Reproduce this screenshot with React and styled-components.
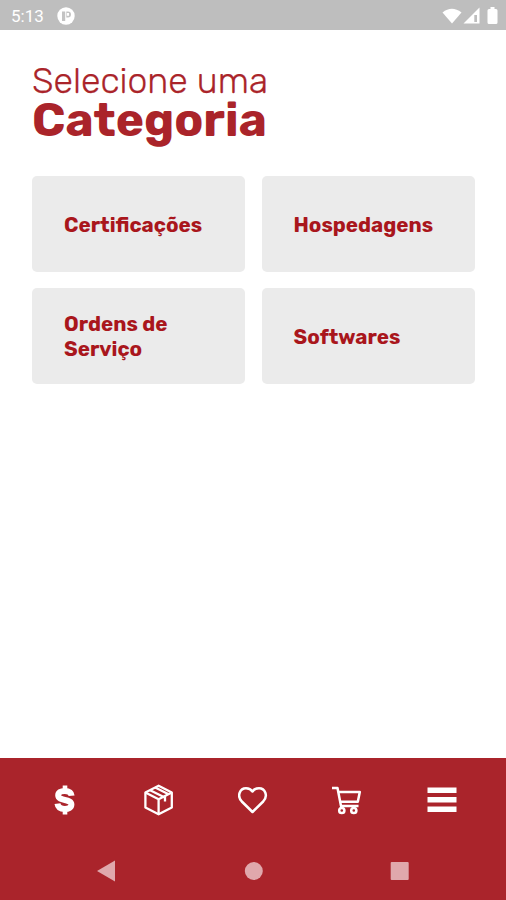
import React from 'react';
import styled, { createGlobalStyle } from 'styled-components';

const GlobalStyle = createGlobalStyle`
  * { box-sizing: border-box; }
  body { margin: 0; background: #fff; }
`;

const Screen = styled.div`
  width: 100%;
  height: 900px;
  display: flex;
  flex-direction: column;
  background: #fff;
  font-family: Rubik, Inter, sans-serif;
  overflow: hidden;
`;

const StatusBar = styled.header`
  height: 30px;
  flex: none;
  display: flex;
  align-items: center;
  justify-content: space-between;
  padding: 1px 8px 0 11px;
  background: #bebebe;
  color: #fff;
`;

const StatusGroup = styled.div`
  display: flex;
  align-items: center;
  gap: ${({ $gap }) => $gap}px;
`;

const Clock = styled.span`
  font: 400 17px/20px Roboto, sans-serif;
`;

const Content = styled.main`
  flex: 1;
  padding: 34px 31px 0 32px;
`;

const Heading = styled.h1`
  margin: 0 0 32px;
  height: 80px;
  color: #aa242a;
  font-weight: 400;
`;

const HeadingLight = styled.span`
  display: block;
  font-size: 35.6px;
  font-weight: 300;
  line-height: 35px;
  white-space: nowrap;
  -webkit-text-stroke: 0.25px currentColor;
`;

const HeadingStrong = styled.strong`
  display: block;
  font-size: 47.7px;
  font-weight: 700;
  line-height: 42px;
`;

const CategoryGrid = styled.div`
  display: grid;
  grid-template-columns: 213px 213px;
  grid-auto-rows: 96px;
  gap: 16.300px 16.500px;
`;

const CategoryCard = styled.button`
  display: flex;
  align-items: center;
  padding: 2px 24px 0 32px;
  border: 0;
  border-radius: 5px;
  background: #ebebeb;
  color: #a9161c;
  font: 700 20.6px/25px Rubik, Inter, sans-serif;
  text-align: left;
  white-space: pre-line;
`;

const BottomArea = styled.footer`
  height: 142px;
  flex: none;
  background: #aa242b;
`;

const TabBar = styled.nav`
  height: 84px;
  display: grid;
  grid-template-columns: repeat(5, 94.4px);
  padding-left: 17px;
`;

const Tab = styled.button`
  display: flex;
  align-items: center;
  justify-content: center;
  padding: 0;
  border: 0;
  background: none;
  color: #fff;
`;

const SystemBar = styled.nav`
  height: 58px;
  display: grid;
  grid-template-columns: repeat(3, 146px);
  padding-left: 34px;
`;

const SystemButton = styled(Tab)`
  height: 58px;
  color: #e0a8ac;
`;

const AppBadge = () => (
  <svg width="18" height="18" viewBox="0 0 18 18">
    <circle cx="9" cy="9" r="8.7" fill="#fff" />
    <path d="M5 4.500h3.200v9.500H5zM9.300 4.500H11a3 3 0 0 1 0 6H9.300z" fill="#c4c4c4" />
    <path d="M9.800 6h2.200v2.800H9.800z" fill="#fff" />
  </svg>
);

const Wifi = () => (
  <svg width="20" height="16" viewBox="0 0 20 16">
    <path d="M.5 4.500Q9.800-3 19.500 4.500L10 15.500Z" fill="#fff" />
  </svg>
);

const Signal = () => (
  <svg width="17" height="17" viewBox="0 0 17 17">
    <path d="M.5 16.500 16.500.5v16z" fill="#fff" />
    <path d="M11.300 8h2.700v7h-2.700z" fill="#bebebe" />
  </svg>
);

const Battery = () => (
  <svg width="11" height="17" viewBox="0 0 11 17">
    <path d="M3.500 0h4v2H9q1.500 0 1.500 1.500v12Q10.500 17 9 17H2Q.5 17 .5 15.500v-12Q.5 2 2 2h1.500z" fill="#fff" />
  </svg>
);

const Dollar = () => (
  <svg width="22" height="30" viewBox="0 0 22 30" fill="none" stroke="currentColor">
    <path d="M12 .5v5M12 24.500v5" strokeWidth="4.600" />
    <path d="M18.600 10.800C18.300 7.500 16 5.900 11.800 5.900 7.700 5.900 5.200 7.600 5.200 10.300c0 6.400 13.200 3 13.200 9.300 0 3-2.800 4.400-6.500 4.400-4.400 0-7-1.700-7.400-5.300" strokeWidth="6" />
  </svg>
);

const Package = () => (
  <svg width="30" height="32" viewBox="0 0 30 32" fill="none" stroke="currentColor" strokeWidth="2.300" strokeLinejoin="round">
    <path d="M14.600 1.700 27.800 8.500v15l-13.200 6.800L1.400 23.500v-15z" />
    <path d="m1.400 8.500 13.200 6.700 13.200-6.700M14.600 15.200v15M6.100 6.200l14.200 7M11.200 3.500l12.900 6.500" />
    <path d="M21 11.500v6" />
  </svg>
);

const Heart = () => (
  <svg width="30" height="28" viewBox="0 0 30 28" fill="none" stroke="currentColor" strokeWidth="2.500" strokeLinejoin="round">
    <path d="M14.500 26 3.800 15.500C-1.500 9.800 2 2.200 8 2.200c3 0 5 1 6.500 3.300C16 3.200 18 2.200 21 2.200 27 2.200 30.500 9.800 25.200 15.500z" />
  </svg>
);

const Cart = () => (
  <svg width="30" height="29" viewBox="0 0 30 29" fill="none" stroke="currentColor" strokeWidth="2.500" strokeLinejoin="round">
    <path d="M0 2h5.500L9 20h17.500M6.300 6h21.500L25.800 15.700H8.200" />
    <circle cx="9.800" cy="24.500" r="2.600" />
    <circle cx="21.800" cy="24.500" r="2.600" />
  </svg>
);

const Menu = () => (
  <svg width="30" height="26" viewBox="0 0 30 26" fill="currentColor">
    <path d="M.5.500h29V6H.5zM.5 10h29v5.500H.5zM.5 19.500h29V25H.5z" />
  </svg>
);

const Back = () => (
  <svg width="20" height="22" viewBox="0 0 20 22" fill="currentColor"><path d="M18 .5v21L0 11z" /></svg>
);
const Home = () => (
  <svg width="19" height="18" viewBox="0 0 19 18" fill="currentColor"><circle cx="9.800" cy="9" r="9" /></svg>
);
const Recents = () => (
  <svg width="19" height="18" viewBox="0 0 19 18" fill="currentColor"><rect x=".7" width="18" height="18" rx="1" /></svg>
);

const categories = ['Certificações', 'Hospedagens', 'Ordens de\nServiço', 'Softwares'];

const tabs = [
  { name: 'Financeiro', Icon: Dollar },
  { name: 'Produtos', Icon: Package },
  { name: 'Favoritos', Icon: Heart },
  { name: 'Carrinho', Icon: Cart },
  { name: 'Menu', Icon: Menu },
];

const systemButtons = [
  { name: 'Voltar', Icon: Back },
  { name: 'Início', Icon: Home },
  { name: 'Recentes', Icon: Recents },
];

export default function App() {
  return (
    <Screen>
      <GlobalStyle />
      <StatusBar>
        <StatusGroup $gap={13}><Clock>5:13</Clock><AppBadge /></StatusGroup>
        <StatusGroup $gap={1}>
          <Wifi />
          <StatusGroup $gap={7}><Signal /><Battery /></StatusGroup>
        </StatusGroup>
      </StatusBar>
      <Content>
        <Heading>
          <HeadingLight>Selecione uma</HeadingLight>
          <HeadingStrong>Categoria</HeadingStrong>
        </Heading>
        <CategoryGrid>
          {categories.map((label) => <CategoryCard key={label}>{label}</CategoryCard>)}
        </CategoryGrid>
      </Content>
      <BottomArea>
        <TabBar>
          {tabs.map(({ name, Icon }) => <Tab key={name} aria-label={name}><Icon /></Tab>)}
        </TabBar>
        <SystemBar>
          {systemButtons.map(({ name, Icon }) => <SystemButton key={name} aria-label={name}><Icon /></SystemButton>)}
        </SystemBar>
      </BottomArea>
    </Screen>
  );
}
